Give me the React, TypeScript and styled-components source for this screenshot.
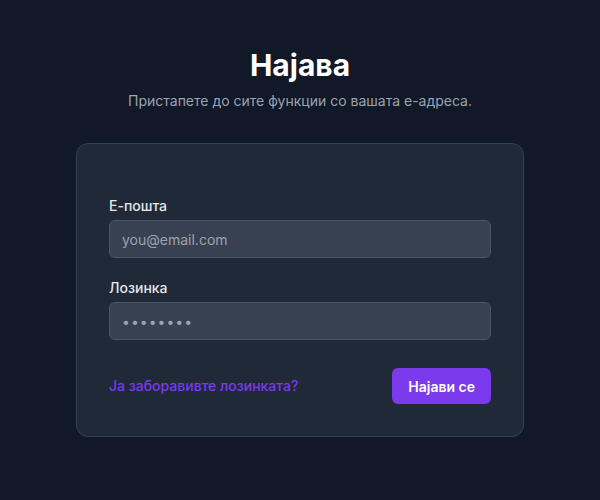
import React from "react";
import styled, { createGlobalStyle } from "styled-components";

const Global = createGlobalStyle`
  html, body { margin: 0; padding: 0; background: #111827; }
  body { font-family: Inter, "Noto Sans", sans-serif; -webkit-font-smoothing: antialiased; }
  * { box-sizing: border-box; }
`;

const Page = styled.div`
  width: 600px;
  height: 500px;
  background: #111827;
  display: flex;
  flex-direction: column;
  align-items: center;
  padding-top: 47px;
`;

const Title = styled.h1`
  margin: 0;
  font-size: 30px;
  line-height: 36px;
  font-weight: 700;
  color: #ffffff;
`;

const Subtitle = styled.p`
  margin: 8px 0 0;
  font-size: 14px;
  line-height: 20px;
  color: #9ca3af;
`;

const Card = styled.form`
  margin-top: 32px;
  width: 448px;
  background: #1f2937;
  border: 1px solid #374151;
  border-radius: 12px;
  padding: 52px 32px 32px;
  display: flex;
  flex-direction: column;
`;

const Field = styled.div<{ $gap?: number }>`
  display: flex;
  flex-direction: column;
  gap: 4px;
  margin-bottom: ${(p) => p.$gap ?? 0}px;
`;

const Label = styled.label`
  font-size: 14px;
  line-height: 20px;
  font-weight: 500;
  color: #e5e7eb;
`;

const Input = styled.input`
  height: 38px;
  width: 100%;
  background: #374151;
  border: 1px solid #4b5563;
  border-radius: 6px;
  padding: 0 12px;
  font-family: inherit;
  font-size: 14px;
  color: #9ca3af;
  outline: none;
  &::placeholder { color: #9ca3af; }
`;

const Dots = styled(Input)`
  letter-spacing: 1px;
  font-size: 14px;
`;

const Row = styled.div`
  display: flex;
  align-items: center;
  justify-content: space-between;
`;

const Link = styled.a`
  font-size: 14px;
  line-height: 20px;
  font-weight: 500;
  color: #7c3aed;
  text-decoration: none;
`;

const Button = styled.button`
  height: 36px;
  padding: 0 16px;
  background: #7c3aed;
  color: #ffffff;
  border: none;
  border-radius: 6px;
  font-family: inherit;
  font-size: 14px;
  font-weight: 600;
`;

export default function App() {
  return (
    <>
      <Global />
      <Page>
        <Title>Најава</Title>
        <Subtitle>Пристапете до сите функции со вашата е-адреса.</Subtitle>
        <Card onSubmit={(e) => e.preventDefault()}>
          <Field $gap={20}>
            <Label>Е-пошта</Label>
            <Input type="email" placeholder="you@email.com" />
          </Field>
          <Field $gap={28}>
            <Label>Лозинка</Label>
            <Dots type="password" defaultValue="12345678" />
          </Field>
          <Row>
            <Link href="#">Ја заборавивте лозинката?</Link>
            <Button type="submit">Најави се</Button>
          </Row>
        </Card>
      </Page>
    </>
  );
}
